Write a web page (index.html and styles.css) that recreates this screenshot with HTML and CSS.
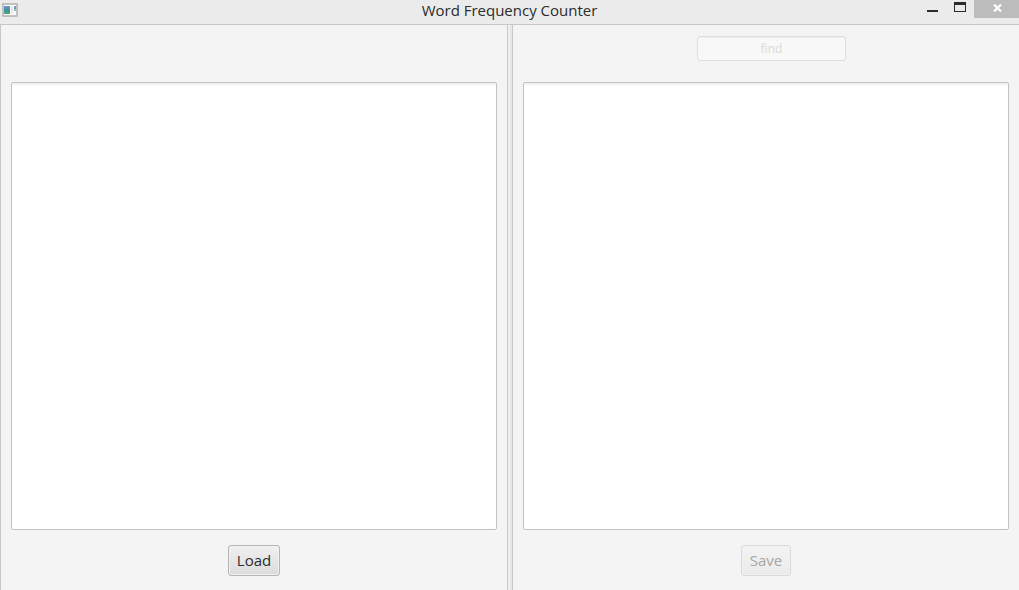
FILE: index.html
```html
<!DOCTYPE html>
<html lang="en">
<head>
<meta charset="utf-8">
<title>Word Frequency Counter</title>
<link rel="stylesheet" href="styles.css">
</head>
<body>
<div class="window">
  <header class="titlebar">
    <div class="titlebar-side">
      <svg class="app-icon" width="16" height="14" viewBox="0 0 16 14" aria-hidden="true">
        <defs>
          <linearGradient id="screen" x1="0" y1="0" x2="0" y2="1">
            <stop offset="0" stop-color="#7896c8"/>
            <stop offset=".5" stop-color="#3c8fa4"/>
            <stop offset="1" stop-color="#55a86c"/>
          </linearGradient>
        </defs>
        <rect x="1" y="1" width="14" height="12" fill="#fbfbfb" stroke="#b0b0b0" stroke-width="1.5"/>
        <rect x="2" y="3" width="6" height="8" fill="url(#screen)"/>
        <rect x="9" y="3" width="2" height="8" fill="#e6e6e6"/>
        <rect x="12" y="3" width="2" height="3" fill="#7896c8"/>
        <rect x="12" y="6" width="2" height="2" fill="#8fc4ae"/>
      </svg>
    </div>
    <h1 class="title">Word Frequency Counter</h1>
    <div class="titlebar-side controls">
      <button class="control" type="button" aria-label="Minimize">
        <svg width="12" height="12" viewBox="0 0 12 12"><path d="M0 10h11v2H0z" fill="#2b2b2b"/></svg>
      </button>
      <button class="control" type="button" aria-label="Maximize">
        <svg width="12" height="12" viewBox="0 0 12 12"><path fill-rule="evenodd" d="M0 2h12v10H0zM1 5v6h10V5z" fill="#2b2b2b"/></svg>
      </button>
      <button class="control close" type="button" aria-label="Close">
        <svg width="9" height="8" viewBox="0 0 9 8"><path d="M1 .5l7 7M8 .5l-7 7" stroke="#fff" stroke-width="2.200"/></svg>
      </button>
    </div>
  </header>
  <main class="panes">
    <section class="pane">
      <div class="pane-head"></div>
      <textarea class="text" aria-label="Source text"></textarea>
      <div class="pane-foot"><button class="button" type="button">Load</button></div>
    </section>
    <div class="divider"></div>
    <section class="pane pane-last">
      <div class="pane-head"><input class="find" type="text" placeholder="find" aria-label="find" disabled></div>
      <textarea class="text" aria-label="Word frequencies"></textarea>
      <div class="pane-foot"><button class="button" type="button" disabled>Save</button></div>
    </section>
  </main>
</div>
</body>
</html>
```
FILE: styles.css
```css
body {
  margin: 0;
  font-family: "Open Sans", "Noto Sans", sans-serif;
  color: #2c2c2c;
}

.window {
  display: flex;
  flex-direction: column;
  height: 100vh;
  background: #f4f4f4;
}

.titlebar {
  display: flex;
  height: 24px;
  background: #ebebeb;
  border-bottom: 1px solid #c8c8c8;
}

.titlebar-side {
  flex: 1;
  display: flex;
}

.app-icon {
  margin: 3px 2px;
}

.title {
  margin: 0;
  font-size: 15px;
  font-weight: 400;
  line-height: 21px;
}

.controls {
  justify-content: flex-end;
  align-items: flex-start;
}

.control {
  display: flex;
  justify-content: center;
  width: 27px;
  height: 18px;
  padding: 0;
  border: 0;
  background: none;
}

.close {
  align-items: center;
  width: 45px;
  margin-left: 1px;
  padding: 0 0 2px 2px;
  background: #bcbcbc;
}

.panes {
  flex: 1;
  display: flex;
  min-height: 0;
}

.pane {
  flex: 1 1 0;
  display: flex;
  flex-direction: column;
  min-width: 0;
  padding: 0 10px;
  border: solid #c8c8c8;
  border-width: 0 1px;
}

.pane-last {
  border-right: 0;
}

.divider {
  width: 4px;
  background: linear-gradient(to right, #f2f2f2, #e4e4e4);
  cursor: col-resize;
}

.pane-head {
  display: flex;
  justify-content: center;
  align-items: flex-start;
  height: 46px;
  padding-top: 11px;
}

.find {
  box-sizing: border-box;
  width: 149px;
  height: 25px;
  margin-left: 11px;
  padding: 0 8px;
  border: 1px solid #dedede;
  border-radius: 3px;
  background: #f8f8f8;
  box-shadow: inset 0 1px 1px #eee;
  font: 400 12px "Open Sans", "Noto Sans", sans-serif;
  text-align: center;
}

.find::placeholder {
  color: #dadad6;
}

.text {
  flex: 1;
  box-sizing: border-box;
  width: 100%;
  padding: 6px 8px;
  border: 1px solid #c2c2c2;
  border-radius: 2px;
  background: #fff;
  box-shadow: inset 0 2px 1px #f0f0f0;
  font: inherit;
  resize: none;
  outline: 0;
}

.pane-foot {
  display: flex;
  justify-content: center;
  align-items: flex-start;
  height: 45px;
  padding-top: 15px;
}

.button {
  height: 31px;
  padding: 0 8px 1px;
  border: 1px solid #b5b5b5;
  border-radius: 3px;
  background: linear-gradient(#f0f0f0, #dcdcdc);
  box-shadow: inset 0 0 0 1px #f1f1f1;
  color: #2c2c2c;
  font: 400 15px "Open Sans", "Noto Sans", sans-serif;
}

.button:disabled {
  border-color: #dadada;
  background: linear-gradient(#f3f3f3, #ebebeb);
  color: #a6a6a6;
}
```
